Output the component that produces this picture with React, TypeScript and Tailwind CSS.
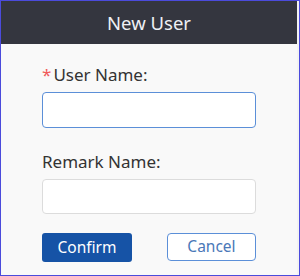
import React from 'react'

const App: React.FC = () => {
  return (
    <div className="w-[300px] h-[276px] border border-[#4b4bdc] bg-[#f3f3f3] overflow-hidden">
      <div
        className="w-[296px] h-full bg-[#f9f9f9] flex flex-col"
        style={{ fontFamily: '"Noto Sans", "Open Sans", sans-serif' }}
      >
        <div className="h-[43px] bg-[#34363f] flex items-center justify-center text-[18.5px] text-[#eef0f4]">
          New User
        </div>
        <div className="px-[41px] pt-[17px]">
          <label className="flex items-center h-[28px] text-[17px] text-[#333]">
            <span className="text-[#f05a5a] mr-[2px]">*</span>User Name:
          </label>
          <input className="mt-[3px] w-[214px] h-[36px] bg-white border border-[#5b8fd8] rounded-[4px] outline-none px-2" />
          <label className="flex items-center h-[28px] mt-[20px] text-[17px] text-[#333]">
            Remark Name:
          </label>
          <input className="mt-[3px] w-[214px] h-[35px] bg-white border border-[#dcdcdc] rounded-[4px] outline-none px-2" />
          <div className="flex justify-between mt-[19px] w-[214px]">
            <button className="w-[90px] h-[29px] bg-[#1653a6] text-white text-[15.5px] rounded-[3px]">
              Confirm
            </button>
            <button className="w-[89px] h-[28px] bg-white border border-[#5b8fd8] text-[#4a78b8] text-[15.5px] rounded-[4px]">
              Cancel
            </button>
          </div>
        </div>
      </div>
    </div>
  )
}

export default App
